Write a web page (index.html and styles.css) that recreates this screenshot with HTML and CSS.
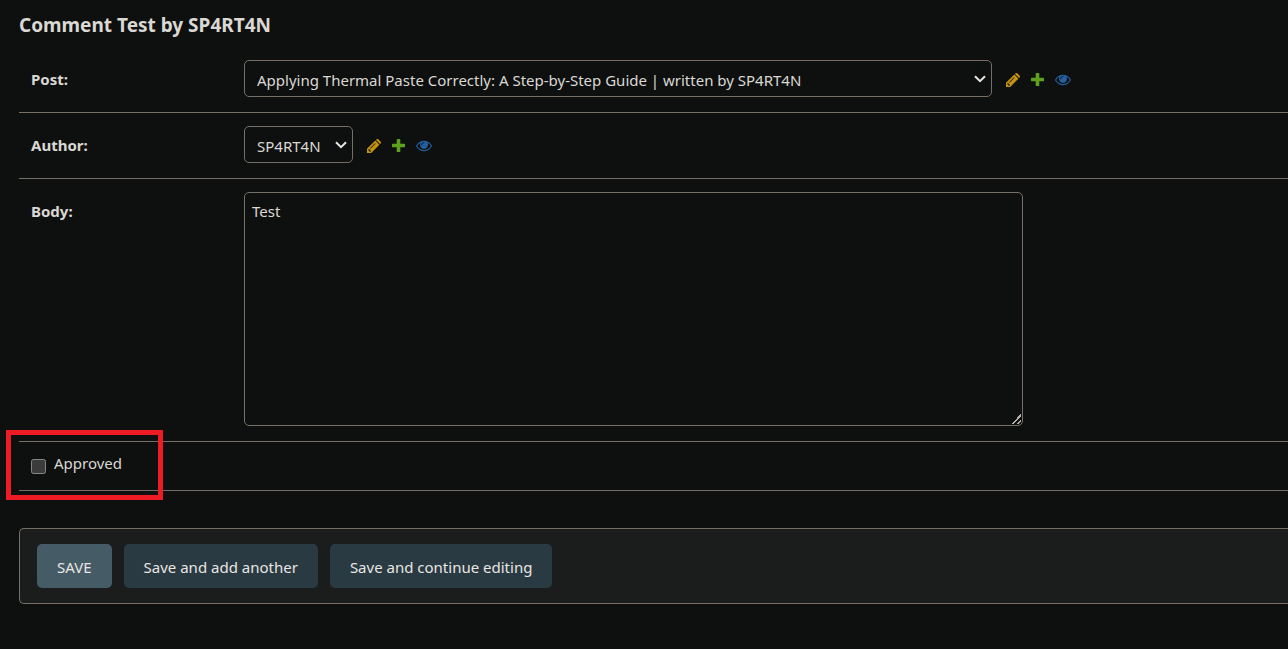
FILE: index.html
```html
<!DOCTYPE html>
<html lang="en">
<head>
<meta charset="utf-8">
<meta name="viewport" content="width=device-width, initial-scale=1">
<title>Comment Test by SP4RT4N</title>
<link rel="stylesheet" href="styles.css">
</head>
<body>
<svg class="sprite" aria-hidden="true">
  <symbol id="pencil" viewBox="0 0 14 14">
    <path fill-rule="evenodd" d="M0 14V9.800L8.300 1.600 12.400 5.700 4.200 14zM1.300 10.600v1h1.100v1.100h1l.7-.7-2.100-2.100zM8 4.200 3 9.200l.5.500 5-5zM9 .9 9.600.3q.9-.6 1.700 0l2.400 2.400q.6.900 0 1.700l-.6.6z"/>
  </symbol>
  <symbol id="plus" viewBox="0 0 13 13">
    <path d="M5.300 0h2.400q.6 0 .6.6v4.100h4.100q.6 0 .6.6v2.400q0 .6-.6.6H8.300v4.100q0 .6-.6.6H5.300q-.6 0-.6-.6V8.300H.6q-.6 0-.6-.6V5.300q0-.6.6-.6h4.100V.6q0-.6.6-.6z"/>
  </symbol>
  <symbol id="eye" viewBox="0 0 1792 1152">
    <path fill-rule="evenodd" d="M1664 576q-152-236-381-353 61 104 61 225 0 185-131.500 316.500T896 896 579.500 764.500 448 448q0-121 61-225-229 117-381 353 133 205 333.500 326.500T896 1024t434.500-121.500T1664 576zM944 192q0-20-14-34t-34-14q-125 0-214.500 89.500T592 448q0 20 14 34t34 14 34-14 14-34q0-86 61-147t147-61q20 0 34-14t14-34zM1792 576q0 34-20 69-140 230-376.500 368.500T896 1152t-499.500-139T20 645Q0 610 0 576t20-69q140-229 376.500-368T896 0t499.500 139T1772 507q20 35 20 69z"/>
  </symbol>
  <symbol id="chevron" viewBox="0 0 12 8">
    <path d="M1 1.200 6 6.200 11 1.200" fill="none" stroke="currentColor" stroke-width="2"/>
  </symbol>
</svg>
<main class="page">
  <h1 class="title">Comment Test by SP4RT4N</h1>
  <form class="form">
    <div class="row">
      <label class="label" for="post">Post:</label>
      <div class="field">
        <div class="select-wrap select-post">
          <select class="select" id="post"><option>Applying Thermal Paste Correctly: A Step-by-Step Guide | written by SP4RT4N</option></select>
          <svg class="chevron" aria-hidden="true"><use href="#chevron"/></svg>
        </div>
        <div class="actions">
          <a class="action edit" href="#" aria-label="Change selected post"><svg class="icon-pencil"><use href="#pencil"/></svg></a>
          <a class="action add" href="#" aria-label="Add another post"><svg class="icon-plus"><use href="#plus"/></svg></a>
          <a class="action view" href="#" aria-label="View selected post"><svg class="icon-eye"><use href="#eye"/></svg></a>
        </div>
      </div>
    </div>
    <div class="row">
      <label class="label" for="author">Author:</label>
      <div class="field">
        <div class="select-wrap select-author">
          <select class="select" id="author"><option>SP4RT4N</option></select>
          <svg class="chevron" aria-hidden="true"><use href="#chevron"/></svg>
        </div>
        <div class="actions">
          <a class="action edit" href="#" aria-label="Change selected user"><svg class="icon-pencil"><use href="#pencil"/></svg></a>
          <a class="action add" href="#" aria-label="Add another user"><svg class="icon-plus"><use href="#plus"/></svg></a>
          <a class="action view" href="#" aria-label="View selected user"><svg class="icon-eye"><use href="#eye"/></svg></a>
        </div>
      </div>
    </div>
    <div class="row">
      <label class="label" for="body">Body:</label>
      <div class="field"><textarea class="textarea" id="body">Test</textarea></div>
    </div>
    <div class="row row-check">
      <input class="check" type="checkbox" id="approved">
      <label class="check-label" for="approved">Approved</label>
      <div class="highlight" aria-hidden="true"></div>
    </div>
    <div class="submit">
      <button class="button primary" type="submit">SAVE</button>
      <button class="button" type="submit">Save and add another</button>
      <button class="button" type="submit">Save and continue editing</button>
    </div>
  </form>
</main>
</body>
</html>
```
FILE: styles.css
```css
:root {
  color-scheme: dark;
  --line: #756f67;
  --text: #dbd8d4;
}

* {
  box-sizing: border-box;
}

body {
  margin: 0;
  background: #0e100f;
  color: var(--text);
  font: 15px/20px "Noto Sans", sans-serif;
}

.sprite {
  display: none;
}

.page {
  padding: 12px 0 44px 19px;
}

.title {
  margin: 0;
  font-size: 19px;
  line-height: 26px;
  font-weight: 700;
}

.form {
  padding-top: 9px;
}

.row {
  display: flex;
  padding: 13px 12px 15px;
  border-bottom: 1px solid var(--line);
}

.label {
  flex: 0 0 213px;
  padding-top: 9px;
  font-weight: 700;
}

.field {
  flex: 1;
  display: flex;
  align-items: center;
}

.select-wrap {
  position: relative;
  display: flex;
}

.select {
  appearance: none;
  width: 100%;
  height: 37px;
  padding: 3px 24px 0 12px;
  border: 1px solid var(--line);
  border-radius: 5px;
  background: #0e100f;
  color: var(--text);
  font: inherit;
}

.select-post {
  width: 748px;
}

.select-author {
  width: 109px;
}

.chevron {
  position: absolute;
  top: 15px;
  right: 6px;
  width: 12px;
  height: 8px;
  color: #e8e6e3;
  pointer-events: none;
}

.actions {
  display: flex;
  align-items: center;
  gap: 11px;
  padding: 2px 0 0 14px;
}

.action {
  display: flex;
}

.action svg {
  fill: currentColor;
}

.edit {
  color: #c4940f;
}

.add {
  color: #5da11f;
}

.view {
  color: #265f9f;
}

.icon-pencil {
  width: 14px;
  height: 14px;
}

.icon-plus {
  width: 13px;
  height: 13px;
}

.icon-eye {
  width: 16px;
  height: 12px;
}

.textarea {
  width: 779px;
  height: 234px;
  padding: 8px 7px;
  border: 1px solid var(--line);
  border-radius: 5px;
  background: #0e100f;
  color: var(--text);
  font: inherit;
}

.textarea::-webkit-resizer {
  background:
    linear-gradient(135deg, transparent 50%, #b5b3b0 50%, #b5b3b0 62%, transparent 62%, transparent 78%, #b5b3b0 78%, #b5b3b0 90%, transparent 90%)
    4px 4px / 10px 10px no-repeat;
}

.row-check {
  position: relative;
  align-items: center;
  gap: 8px;
  padding: 13px 12px 15px;
}

.check {
  width: 15px;
  height: 15px;
  margin: 3px 0 0;
}

.check-label {
  margin: -2px 0 2px;
}

.highlight {
  position: absolute;
  top: -12px;
  left: -13px;
  width: 157px;
  height: 70px;
  border: 5px solid #ed1c24;
  pointer-events: none;
}

.submit {
  display: flex;
  gap: 12px;
  margin-top: 37px;
  padding: 15px 17px;
  border: 1px solid var(--line);
  border-right: 0;
  border-radius: 5px 0 0 5px;
  background: #1b1d1c;
}

.button {
  height: 44px;
  padding: 2px 20px 0;
  border: 0;
  border-radius: 5px;
  background: #2a3a42;
  color: #e8e6e3;
  font: inherit;
}

.primary {
  background: #455b66;
}
```
